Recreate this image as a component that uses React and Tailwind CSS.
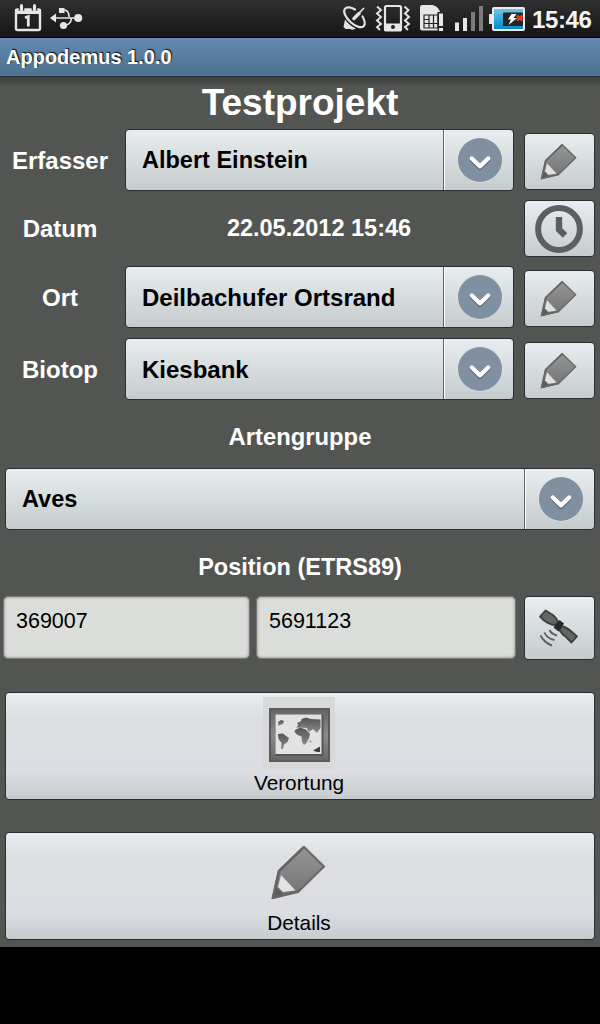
import { useState } from 'react';
import clsx from 'clsx';

// Shared look of every raised light button
const RAISED = 'border border-[#2b2e36] rounded-[4px] bg-linear-to-b from-[#e8edf0] to-[#c6cbce]';

const PencilIcon = ({ size = 48 }) => (
  <svg width={size} height={size} viewBox="0 0 72 72" fill="none" className="mr-[2px]">
    <defs>
      <linearGradient id="lead" x1="0" y1="0" x2="0" y2="1">
        <stop offset="0" stopColor="#969696" />
        <stop offset="1" stopColor="#727272" />
      </linearGradient>
    </defs>
    <path d="M41 10 61 29.500 36 54 10 61 16 34Z" fill="url(#lead)" stroke="#6a6a6a" strokeWidth="2.200" strokeLinejoin="round" />
    <path d="M18 38 32.500 53.500 20 55 15 50Z" fill="#e0e2e3" />
    <path d="M13 50 20 57 9.500 61Z" fill="#5c5c5c" />
    <path d="M41 10 16 34 10 60.500 36 54.500" stroke="#666" strokeWidth="2.600" />
  </svg>
);

const ClockIcon = () => (
  <svg width="48" height="48" viewBox="0 0 48 48" fill="none" stroke="#5b5f62" className="mr-[2px]">
    <circle cx="24" cy="24" r="20.900" strokeWidth="6" />
    <path d="M24 12v12.500l6 6" strokeWidth="6.400" />
  </svg>
);

const SatelliteIcon = () => (
  <svg width="48" height="48" viewBox="0 0 48 48" fill="none" className="mr-[1px]">
    <g fill="#656565" stroke="#3e3e3e" strokeWidth="1.800" strokeLinejoin="round">
      <path d="M10.500 6.500 5 12.500 9 16.500Q15 21 20.500 21L23 17.500Q20.500 12 15.500 9.500Z" />
      <path d="M26.500 22 24.500 26Q27 30.500 31.500 33.500L36.500 38.500 42 32.500 37 28Q31 23 26.500 22Z" />
    </g>
    <path d="M24.500 16 29 19.500 23.500 27.500 18.500 23.500Z" fill="#292929" />
    <g stroke="#5a5f61" strokeWidth="1.900">
      <path d="M14.500 26Q16.500 30 22 31.500" />
      <path d="M9.500 28.500Q12 34.500 19.500 36" />
      <path d="M5.500 31.500Q9 38.500 17 41.500" />
    </g>
  </svg>
);

const MapIcon = () => (
  <svg width="72" height="72" viewBox="0 0 72 72" className="mr-[2px] bg-[#d9d9d9]">
    <defs>
      <linearGradient id="frame" x1="0" y1="0" x2="0" y2="1">
        <stop offset="0" stopColor="#646464" />
        <stop offset="0.5" stopColor="#8b8b8b" />
        <stop offset="1" stopColor="#666" />
      </linearGradient>
      <linearGradient id="land" x1="0" y1="0" x2="0" y2="1">
        <stop offset="0" stopColor="#555" />
        <stop offset="1" stopColor="#8a8a8a" />
      </linearGradient>
    </defs>
    <rect x="7" y="12" width="59" height="52" fill="url(#frame)" stroke="#5b5b5b" strokeWidth="2" />
    <rect x="12.500" y="17.500" width="48" height="41.500" fill="#555" />
    <rect x="12.500" y="17.500" width="46" height="39.500" fill="#e2e2e2" />
    <g fill="url(#land)">
      <path d="M15 25 18 23 21 24 20 27 17 28 15.500 29Z" />
      <path d="M15 37 20 36.500 23 39 26 41 24.500 45 21 47.500 20 52 18 52 18.500 46 15.500 42Z" />
      <path d="M32 33 37 30.500 43 32.500 47 37 46 41 43.500 46 41 48 39 45 38.500 39.500 34.500 38 31.500 35Z" />
      <path d="M34 26 38 24 38.500 22 43 20.500 48 22 57.500 22.500 57.500 31 54 36 50 32 46 35 43 30 40 28 36 29.500Z" />
      <path d="M33 30.500 35.500 28 41 28.500 45 31Z" />
    </g>
    <path d="M50 53.500 57 49.500V55H54Z" fill="#3e3e3e" />
    <circle cx="47.500" cy="44.500" r="1" fill="#888" />
  </svg>
);

const Spinner = ({ value, className, textClass = 'text-[24px]' }) => (
  <button className={clsx('flex h-[62px] items-stretch text-left', RAISED, className)}>
    <span className={clsx('flex flex-1 items-center border-r border-[#5f6468] pt-px pl-4 font-bold text-black', textClass)}>
      {value}
    </span>
    <span className="flex w-[69px] items-center justify-center border-l border-white pl-[2px]">
      <svg width="44" height="46" viewBox="0 0 44 46" fill="none" strokeLinecap="round" strokeLinejoin="round">
        <circle cx="22" cy="23.800" r="21.500" fill="#eef1f3" />
        <circle cx="22" cy="23" r="22" fill="#7f90a0" />
        <path d="M13.800 22.500 22 30.800 30.200 22.500" stroke="#4b545e" strokeWidth="4.400" />
        <path d="M13.800 21.500 22 29.500 30.200 21.500" stroke="#fff" strokeWidth="4.400" />
      </svg>
    </span>
  </button>
);

const IconButton = ({ children, className }) => (
  <button className={clsx('flex w-[71px] items-center justify-center', RAISED, className)}>
    {children}
  </button>
);

const Label = ({ children }) => (
  <span className="w-[120px] pt-px text-center text-[24px] font-bold">{children}</span>
);

const CoordInput = ({ initial, className }) => {
  const [value, setValue] = useState(initial);
  return (
    <input
      value={value}
      onChange={(e) => setValue(e.target.value)}
      className={clsx(
        'h-[63px] rounded-[5px] border border-[#777975] bg-[#dbdddb] pb-[13px] text-[21.500px] text-black shadow-[inset_0_0_3px_#777]',
        className
      )}
    />
  );
};

const BigButton = ({ icon, label, className }) => (
  <button
    className={clsx(
      'mx-[5px] flex h-[108px] flex-col items-center rounded-[4px] border border-[#2b2e36] pt-[4px] text-black',
      'bg-[linear-gradient(#e8edf0,#dcdfe2_24%,#dcdde2_75%,#c6cbce)]',
      className
    )}
  >
    {icon}
    <span className="pr-[2px] text-[20.800px] leading-[28px]">{label}</span>
  </button>
);

const StatusBar = () => (
  <div className="flex h-[38px] items-start border-b border-black bg-linear-to-b from-[#303030] to-[#161616]">
    <svg width="90" height="37" viewBox="0 0 90 37" fill="none">
      <rect x="16" y="9.500" width="24" height="20.500" rx="1.500" stroke="#e6e6e6" strokeWidth="2.400" />
      <path d="M15 9h26v5H15Z" fill="#e6e6e6" />
      <path d="M21.500 3.500v7M34.500 3.500v7" stroke="#222" strokeWidth="5.500" />
      <path d="M21.500 5.500v4M34.500 5.500v4" stroke="#e6e6e6" strokeWidth="3.200" strokeLinecap="round" />
      <path d="M25 17.800 28.300 16.500V26.500" stroke="#e6e6e6" strokeWidth="2.800" />
      <g stroke="#e6e6e6" strokeWidth="1.600">
        <path d="M54 18h22M64 10c4 0 5 3 5 7M63 25.500c5 0 8-1.500 8.500-7.500" />
        <path d="M50 18 56 13.500V22.500Z" fill="#e6e6e6" stroke="none" />
        <path d="M59 8h5.500v5H59Z" fill="#e6e6e6" stroke="none" />
        <circle cx="63.500" cy="25.500" r="3.600" fill="#e6e6e6" stroke="none" />
        <circle cx="78.200" cy="18" r="4" fill="#e6e6e6" stroke="none" />
      </g>
    </svg>
    <svg className="ml-auto" width="190" height="37" viewBox="338 0 190 37" fill="none">
      {/* gps dish */}
      <g stroke="#e2e2e2" strokeWidth="2.200" strokeLinecap="round">
        <path d="M355 9.500C351 7 346.500 6.500 344.800 9 342.800 12 346 18 351 22.500S361.500 28.500 363.800 26C365.500 24 364.500 20 362.500 16.500" />
        <path d="M353.500 19 363.500 8.500" strokeWidth="1.800" />
        <path d="M354 18.500 359 13.500" strokeWidth="3.400" />
      </g>
      <path d="M345 19.500Q349 25.500 356 28.500Q353 30.500 350 29H345.500L343.500 27Z" fill="#e2e2e2" />
      {/* vibrate */}
      <g stroke="#e6e6e6">
        <path d="M377 6.500 381 10 377 13.500 381 17 377 20.500 381 24 377 27 380 30" strokeWidth="1.900" />
        <path d="M404.500 6.500 408.500 10 405 13.500 409 17 405 20.500 409 24 405 27 408 30" strokeWidth="1.900" />
        <rect x="385" y="6" width="16" height="24.500" rx="1.500" strokeWidth="2.200" />
        <path d="M384.500 23.500h17v7.500h-17Z" fill="#e6e6e6" stroke="none" />
        <circle cx="393" cy="27" r="2" fill="#222" stroke="none" />
      </g>
      {/* sim card */}
      <path d="M420 7.500q0-2.500 2.500-2.500h10q6 1 8.500 9v16.500h-18.500q-2.500 0-2.500-2.500Z" fill="#e6e6e6" />
      <path d="M424 15h14v13h-14ZM424 19.500h4.500M424 23.500h14M429 15v13M433.500 15v13" stroke="#222" strokeWidth="1.200" />
      <path d="M437.500 12h6.500v20h-6.500Z" fill="#222" />
      <path d="M439 13.500h4V26h-4ZM439 28h4v3h-4Z" fill="#e6e6e6" />
      {/* signal */}
      <path d="M455 22.500h4V31h-4ZM463 18h4V31h-4Z" fill="#e6e6e6" />
      <path d="M471 12h4V31h-4ZM479 6h4V31h-4Z" fill="#7b7b7b" />
      {/* battery */}
      <defs>
        <linearGradient id="charge" x1="0" y1="0" x2="0" y2="1">
          <stop offset="0" stopColor="#7cc5e4" />
          <stop offset="0.5" stopColor="#2fa9dc" />
          <stop offset="1" stopColor="#0786c4" />
        </linearGradient>
      </defs>
      <path d="M489 14h5v10h-5Z" fill="#e6e6e6" />
      <rect x="493" y="8" width="31" height="22" rx="1" fill="url(#charge)" stroke="#ececec" strokeWidth="2" />
      <rect x="503" y="12.500" width="20" height="13.500" rx="1" fill="#252525" />
      <path d="M511.500 14h5l-3 4h3.500l-8.500 7 2.500-5.500H508Z" fill="#fff" />
      <path d="m517 15.500 5.500 5M522.500 15.500l-5.500 5" stroke="#e8401c" strokeWidth="2.400" />
    </svg>
    <span className="w-[72px] pl-[4px] text-[24px] leading-[39px] font-bold tracking-[-0.400px] text-[#f4f4f4]">15:46</span>
  </div>
);

export default function App() {
  return (
    <div className="min-h-screen w-[600px] bg-black font-['Liberation_Sans',Arial,sans-serif] text-white">
      <StatusBar />
      <div className="flex h-[39px] items-center border-b border-[#263440] bg-linear-to-b from-[#6389b1] to-[#4d7190] pl-[6px] text-[20px] font-bold [text-shadow:1px_-1px_1px_#111]">
        Appodemus 1.0.0
      </div>

      <main className="flex h-[870px] flex-col bg-[#535552] bg-linear-to-b from-[#3c3f3b] to-[#535552] to-[10px]">
        <h1 className="h-[52px] text-center text-[37px] leading-[52px] font-bold">Testprojekt</h1>

        <div className="flex h-[62px] items-center">
          <Label>Erfasser</Label>
          <Spinner value="Albert Einstein" textClass="text-[23.500px]" className="ml-[5px] w-[389px]" />
          <IconButton className="mt-[3px] ml-[10px] h-[57px]"><PencilIcon /></IconButton>
        </div>

        <div className="mt-[9px] flex h-[57px] items-center">
          <Label>Datum</Label>
          <span className="w-[404px] pr-[6px] text-center text-[23.500px] font-bold">22.05.2012 15:46</span>
          <IconButton className="h-[57px]"><ClockIcon /></IconButton>
        </div>

        <div className="mt-[9px] flex h-[62px] items-center">
          <Label>Ort</Label>
          <Spinner value="Deilbachufer Ortsrand" className="ml-[5px] w-[389px]" />
          <IconButton className="mt-[3px] ml-[10px] h-[57px]"><PencilIcon /></IconButton>
        </div>

        <div className="mt-[10px] flex h-[62px] items-center">
          <Label>Biotop</Label>
          <Spinner value="Kiesbank" className="ml-[5px] w-[389px]" />
          <IconButton className="mt-[3px] ml-[10px] h-[57px]"><PencilIcon /></IconButton>
        </div>

        <h2 className="h-[68px] text-center text-[23.800px] leading-[74px] font-bold">Artengruppe</h2>
        <Spinner value="Aves" textClass="text-[23.500px]" className="mx-[5px]" />
        <h2 className="h-[66px] text-center text-[23.500px] leading-[74px] font-bold">Position (ETRS89)</h2>

        <div className="flex h-[64px] items-start pl-[3px]">
          <CoordInput initial="369007" className="w-[247px] pl-[12px]" />
          <CoordInput initial="5691123" className="ml-[6px] w-[260px] pl-[12px]" />
          <IconButton className="ml-[8px] h-[64px]"><SatelliteIcon /></IconButton>
        </div>

        <BigButton icon={<MapIcon />} label="Verortung" className="mt-[32px]" />
        <BigButton icon={<PencilIcon size={72} />} label="Details" className="mt-[32px]" />
      </main>
    </div>
  );
}
